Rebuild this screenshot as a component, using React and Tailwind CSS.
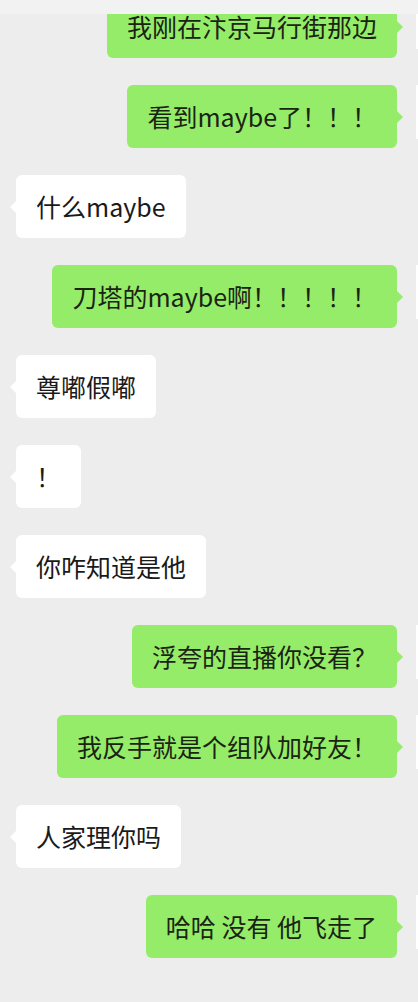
import React from "react";

const messages = [
  { me: true, text: "我刚在汴京马行街那边" },
  { me: true, text: "看到maybe了！！！" },
  { me: false, text: "什么maybe" },
  { me: true, text: "刀塔的maybe啊！！！！！" },
  { me: false, text: "尊嘟假嘟" },
  { me: false, text: "！" },
  { me: false, text: "你咋知道是他" },
  { me: true, text: "浮夸的直播你没看？" },
  { me: true, text: "我反手就是个组队加好友！" },
  { me: false, text: "人家理你吗" },
  { me: true, text: "哈哈 没有 他飞走了" },
];

function Bubble({ me, text }) {
  return (
    <div
      className={`relative rounded-md px-5 py-[14px] text-[25px] leading-[35px] whitespace-nowrap ${
        me ? "bg-[#95ec69] text-[#1b2413]" : "bg-white text-[#1a1a1a]"
      }`}
    >
      {text}
      {me ? (
        <span className="absolute top-1/2 -right-[6px] -translate-y-1/2 w-0 h-0 border-y-[6px] border-y-transparent border-l-[6px] border-l-[#95ec69]" />
      ) : (
        <span className="absolute top-1/2 -left-[6px] -translate-y-1/2 w-0 h-0 border-y-[6px] border-y-transparent border-r-[6px] border-r-white" />
      )}
    </div>
  );
}

function Row({ me, text }) {
  if (me) {
    return (
      <div className="flex justify-end items-start gap-[19px] -mr-[52px]">
        <Bubble me text={text} />
        <div className="w-[54px] h-[54px] bg-white shrink-0" />
      </div>
    );
  }
  return (
    <div className="flex justify-start pl-4">
      <Bubble text={text} />
    </div>
  );
}

export default function App() {
  return (
    <div
      className="w-[418px] h-[1002px] bg-[#ededed] overflow-hidden flex flex-col"
      style={{ fontFamily: '"Noto Sans CJK SC", "Noto Sans", sans-serif' }}
    >
      <div className="h-[14px] bg-[#f2f2f2] shrink-0 relative z-10" />
      <div className="flex-1 overflow-hidden">
        <div className="flex flex-col gap-[27px] -mt-[19px]">
          {messages.map((m, i) => (
            <Row key={i} me={m.me} text={m.text} />
          ))}
        </div>
      </div>
    </div>
  );
}
